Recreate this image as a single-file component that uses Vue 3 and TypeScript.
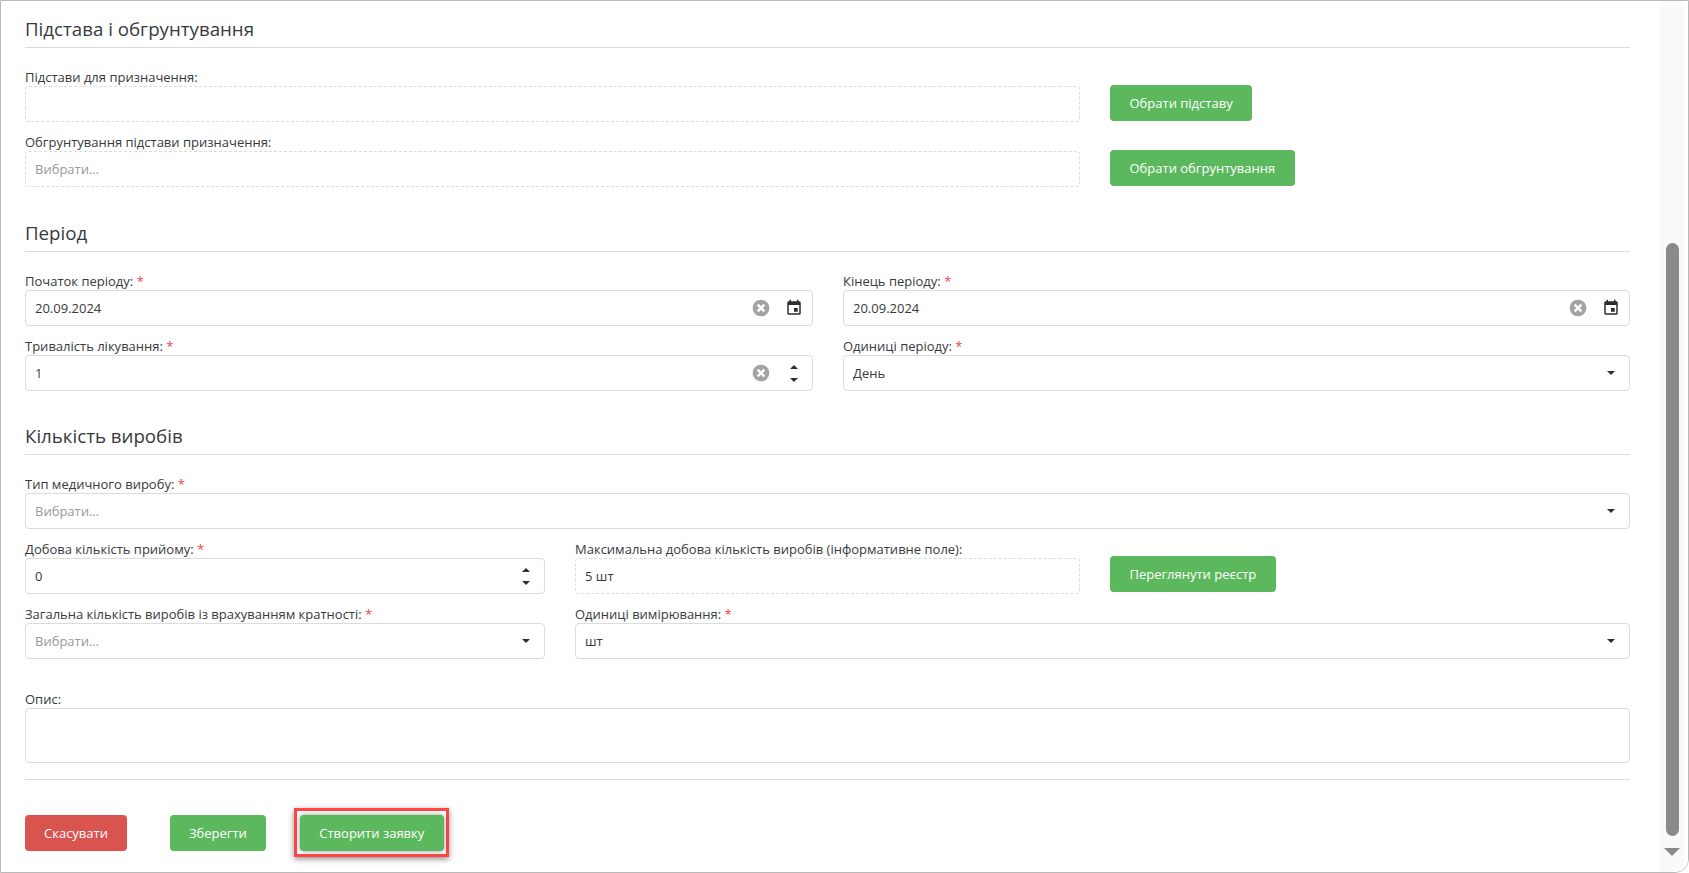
<script setup lang="ts">
const calendarPath =
  'M19 19H5V8h14m-3-7v2H8V1H6v2H5c-1.11 0-2 .89-2 2v14a2 2 0 0 0 2 2h14a2 2 0 0 0 2-2V5a2 2 0 0 0-2-2h-1V1m-1 11h-5v5h5v-5z'
const crossPath = 'M8 8l8 8M16 8l-8 8'
</script>

<template>
  <div class="frame">
    <main class="form">
      <section>
        <h2>Підстава і обгрунтування</h2>
        <div class="row row-action">
          <div class="field">
            <label>Підстави для призначення:</label>
            <div class="input dashed"></div>
          </div>
          <button class="btn green">Обрати підставу</button>
        </div>
        <div class="row row-action">
          <div class="field">
            <label>Обгрунтування підстави призначення:</label>
            <div class="input dashed placeholder">Вибрати...</div>
          </div>
          <button class="btn green">Обрати обгрунтування</button>
        </div>
      </section>

      <section>
        <h2>Період</h2>
        <div class="row row-half">
          <div class="field">
            <label>Початок періоду: <i>*</i></label>
            <div class="input">
              <span>20.09.2024</span>
              <svg class="clear" viewBox="0 0 24 24"><circle cx="12" cy="12" r="10" /><path :d="crossPath" /></svg>
              <svg class="calendar" viewBox="0 0 24 24"><path :d="calendarPath" /></svg>
            </div>
          </div>
          <div class="field">
            <label>Кінець періоду: <i>*</i></label>
            <div class="input">
              <span>20.09.2024</span>
              <svg class="clear" viewBox="0 0 24 24"><circle cx="12" cy="12" r="10" /><path :d="crossPath" /></svg>
              <svg class="calendar" viewBox="0 0 24 24"><path :d="calendarPath" /></svg>
            </div>
          </div>
        </div>
        <div class="row row-half">
          <div class="field">
            <label>Тривалість лікування: <i>*</i></label>
            <div class="input">
              <span>1</span>
              <svg class="clear" viewBox="0 0 24 24"><circle cx="12" cy="12" r="10" /><path :d="crossPath" /></svg>
              <div class="spinner"><b class="up"></b><b class="down"></b></div>
            </div>
          </div>
          <div class="field">
            <label>Одиниці періоду: <i>*</i></label>
            <div class="input">
              <span>День</span>
              <b class="down caret"></b>
            </div>
          </div>
        </div>
      </section>

      <section>
        <h2>Кількість виробів</h2>
        <div class="row">
          <div class="field">
            <label>Тип медичного виробу: <i>*</i></label>
            <div class="input placeholder">
              <span>Вибрати...</span>
              <b class="down caret"></b>
            </div>
          </div>
        </div>
        <div class="row row-three">
          <div class="field">
            <label>Добова кількість прийому: <i>*</i></label>
            <div class="input">
              <span>0</span>
              <div class="spinner"><b class="up"></b><b class="down"></b></div>
            </div>
          </div>
          <div class="field">
            <label>Максимальна добова кількість виробів (інформативне поле):</label>
            <div class="input dashed">5 шт</div>
          </div>
          <button class="btn green raised">Переглянути реєстр</button>
        </div>
        <div class="row row-split">
          <div class="field">
            <label>Загальна кількість виробів із врахуванням кратності: <i>*</i></label>
            <div class="input placeholder">
              <span>Вибрати...</span>
              <b class="down caret"></b>
            </div>
          </div>
          <div class="field">
            <label>Одиниці вимірювання: <i>*</i></label>
            <div class="input">
              <span>шт</span>
              <b class="down caret"></b>
            </div>
          </div>
        </div>
        <div class="row description">
          <div class="field">
            <label>Опис:</label>
            <div class="input textarea"></div>
          </div>
        </div>
      </section>

      <footer>
        <button class="btn red cancel">Скасувати</button>
        <button class="btn green save">Зберегти</button>
        <span class="highlight"><button class="btn green create">Створити заявку</button></span>
      </footer>
    </main>

    <aside class="scrollbar">
      <div class="thumb"></div>
      <div class="arrow"></div>
    </aside>
  </div>
</template>

<style>
html,
body {
  margin: 0;
  background: #fff;
  overflow: hidden;
}
</style>

<style scoped>
.frame {
  box-sizing: border-box;
  display: flex;
  height: 873px;
  border: 1px solid #b9b9b9;
  border-bottom-right-radius: 14px;
  font-family: 'Open Sans', 'Noto Sans', sans-serif;
  font-size: 13px;
  color: #373a3c;
  overflow: hidden;
}

.form {
  box-sizing: border-box;
  flex: 0 0 1659px;
  padding: 0 30px 0 24px;
}

h2 {
  height: 30px;
  margin: 0;
  padding-top: 16px;
  border-bottom: 1px solid #dcdcdc;
  font-size: 18.7px;
  font-weight: 400;
  line-height: 24px;
}

section + section {
  margin-top: 18px;
}

section + section + section {
  margin-top: 17px;
}

.row {
  display: grid;
  column-gap: 30px;
  margin-top: 11px;
  align-items: end;
}

h2 + .row {
  margin-top: 20px;
}

.row-action {
  grid-template-columns: 1055px auto;
  justify-content: start;
}

.row-half {
  grid-template-columns: 788px 1fr;
}

.row-three {
  grid-template-columns: 520px 505px auto;
  justify-content: start;
}

.row-split {
  grid-template-columns: 520px 1fr;
}

.description {
  margin-top: 31px;
}

.field {
  display: flex;
  flex-direction: column;
  min-width: 0;
}

label {
  height: 18px;
  line-height: 18px;
  white-space: nowrap;
}

label i {
  color: #e44;
  font-style: normal;
}

.input {
  box-sizing: border-box;
  display: flex;
  align-items: center;
  height: 36px;
  padding: 0 9px;
  border: 1px solid #dcdcdc;
  border-radius: 4px;
  background: #fff;
}

.input span {
  flex: 1;
}

.dashed {
  border-style: dashed;
}

.placeholder {
  color: #999;
}

.textarea {
  height: 55px;
}

.clear {
  width: 20px;
  height: 20px;
}

.clear circle {
  fill: #a3a3a3;
}

.clear path {
  fill: none;
  stroke: #fff;
  stroke-width: 3;
}

.calendar {
  width: 18px;
  height: 18px;
  margin-left: 14px;
  fill: #2b2f33;
}

.spinner {
  display: flex;
  flex-direction: column;
  gap: 9px;
  width: 10px;
  margin: 0 3px 0 19px;
}

.up,
.down {
  display: block;
  width: 0;
  height: 0;
  border-left: 4px solid transparent;
  border-right: 4px solid transparent;
}

.up {
  border-bottom: 4px solid #2b2f33;
}

.down {
  border-top: 4px solid #2b2f33;
}

.caret {
  margin-right: 5px;
}

.btn {
  height: 36px;
  margin-bottom: 1px;
  padding: 0 19.5px;
  border: 0;
  border-radius: 4px;
  color: #fff;
  font-family: inherit;
  font-size: 13px;
  line-height: 36px;
  white-space: nowrap;
}

.raised {
  margin-bottom: 2px;
}

.green {
  background: #5cb85c;
}

.red {
  background: #d9534f;
}

footer {
  display: flex;
  align-items: flex-start;
  margin-top: 16px;
  padding-top: 28px;
  border-top: 1px solid #dcdcdc;
}

.cancel {
  margin-top: 7px;
  padding: 0 19px;
}

.save {
  margin: 7px 0 0 43px;
  padding: 0 19px;
}

.highlight {
  display: flex;
  margin-left: 28px;
  padding: 4px 2px 3px 3px;
  border: 3px solid #f44;
  box-shadow: 0 2px 6px rgba(0, 0, 0, 0.45);
}

.create {
  margin-bottom: 0;
  box-shadow: 0 0 4px rgba(0, 0, 0, 0.45);
}

.scrollbar {
  flex: 1;
  display: flex;
  flex-direction: column;
  align-items: center;
  background: #fafafa;
  border-right: 4px solid #fff;
}

.thumb {
  width: 13px;
  height: 593px;
  margin-top: 242px;
  border-radius: 7px;
  background: #8a8a8a;
}

.arrow {
  width: 0;
  height: 0;
  margin-top: 12px;
  border-left: 8px solid transparent;
  border-right: 8px solid transparent;
  border-top: 8px solid #8a8a8a;
}
</style>
